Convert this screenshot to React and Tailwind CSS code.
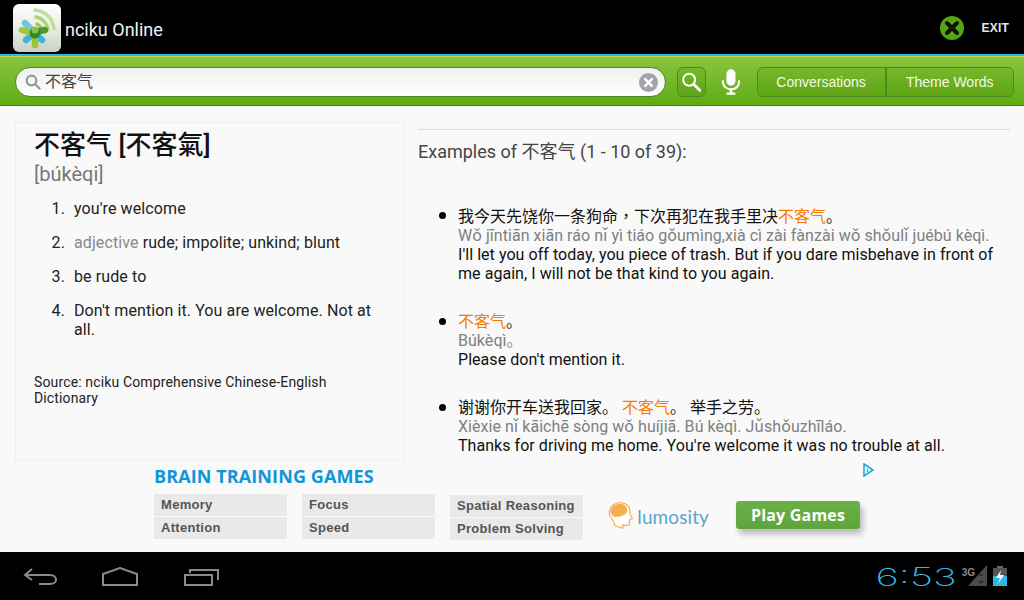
const CJK = 'font-["Roboto","Noto_Sans_CJK_SC",sans-serif]';

function Logo() {
    return (
        <div className="w-12 h-12 rounded-md bg-gradient-to-b from-white via-[#e8eee0] to-[#c9d0c4] overflow-hidden shrink-0">
            <svg viewBox="0 0 48 48" className="w-12 h-12">
                <path d="M22 6 C32 7 40 14 41 25" fill="none" stroke="#c3dc9c" strokeWidth="3.5" strokeLinecap="round" />
                <path d="M23 13 C29 14 34 19 35 25" fill="none" stroke="#aed07a" strokeWidth="3.5" strokeLinecap="round" />
                <path d="M24 20 C26 21 28 23 29 25" fill="none" stroke="#9cc55a" strokeWidth="3.5" strokeLinecap="round" />
                <g strokeLinecap="round" strokeWidth="6.5">
                    <path d="M12 19 L19 26" stroke="#6cc6e0" />
                    <path d="M29 36 L25 32" stroke="#3db4dc" />
                    <path d="M13 36 L19 31" stroke="#3db4dc" />
                    <path d="M9 26 L16 28" stroke="#a3c63c" />
                    <path d="M22 32 L22 41" stroke="#9cc23b" />
                    <path d="M26 27 L32 26" stroke="#4d9a2b" />
                </g>
                <circle cx="22" cy="29" r="5.5" fill="#2f8a2a" />
                <circle cx="22" cy="26" r="3.5" fill="#8fbc4a" />
            </svg>
        </div>
    );
}

function TopBar() {
    return (
        <div className="h-[54px] bg-black flex items-center pt-[2px] pl-[13px] pr-[15px]">
            <Logo />
            <span className="ml-1 mt-[2px] text-[18px] text-[#f2f2f2] font-['Roboto',sans-serif]">nciku Online</span>
            <svg viewBox="0 0 24 24" className="ml-auto w-6 h-6">
                <circle cx="12" cy="12" r="12" fill="#57a515" />
                <path d="M7 7 L17 17 M17 7 L7 17" stroke="#0b1405" strokeWidth="4" strokeLinecap="round" />
            </svg>
            <span className="ml-[18px] text-[12px] font-bold text-[#e6e6e6] tracking-[0.2px] font-['Liberation_Sans',sans-serif]">EXIT</span>
        </div>
    );
}

function SearchBar() {
    return (
        <div className="h-[50px] pt-[2px] border-t border-[#b5dc5c] border-b border-b-[#3e7a0c] bg-gradient-to-b from-[#8ac53e] to-[#5fab10] flex items-center pl-[15px] pr-[10px]">
            <div className="w-[652px] h-[30px] rounded-full bg-gradient-to-b from-[#f0f0f0] to-white border border-[#4e8a18] flex items-center pl-[9px] pr-[7px]">
                <svg viewBox="0 0 16 16" className="w-[16px] h-[16px] shrink-0">
                    <circle cx="6.5" cy="6.5" r="4.8" fill="none" stroke="#8f9a9a" strokeWidth="2.2" />
                    <path d="M10 10 L14.5 14.5" stroke="#8f9a9a" strokeWidth="2.4" strokeLinecap="round" />
                </svg>
                <span className={`ml-[4px] text-[16px] text-[#444] ${CJK}`}>不客气</span>
                <svg viewBox="0 0 20 20" className="ml-auto w-[19px] h-[19px]">
                    <circle cx="10" cy="10" r="10" fill="#a3a3aa" />
                    <path d="M6.5 6.5 L13.5 13.5 M13.5 6.5 L6.5 13.5" stroke="#fff" strokeWidth="2.6" strokeLinecap="round" />
                </svg>
            </div>
            <div className="ml-[11px] w-[29px] h-[30px] rounded-md border border-[#4e8a18] bg-gradient-to-b from-[#76b82c] to-[#5fa514] flex items-center justify-center">
                <svg viewBox="0 0 24 24" className="w-[22px] h-[22px]">
                    <circle cx="10" cy="9.5" r="6.5" fill="none" stroke="#fff" strokeWidth="2.2" />
                    <path d="M15 14.5 L21.5 21" stroke="#fff" strokeWidth="3.2" strokeLinecap="round" />
                </svg>
            </div>
            <svg viewBox="0 0 22 30" className="ml-[15px] w-[20px] h-[28px]">
                <rect x="6" y="1" width="10" height="18" rx="5" fill="#fff" />
                <path d="M2 13 C2 20 6 23 11 23 C16 23 20 20 20 13" fill="none" stroke="#fff" strokeWidth="2.2" />
                <rect x="9.5" y="23" width="3" height="4" fill="#fff" />
                <rect x="6" y="26.5" width="10" height="2.5" rx="1" fill="#fff" />
            </svg>
            <div className="ml-[16px] w-[258px] h-[30px] rounded-md border border-[#4e8a18] bg-gradient-to-b from-[#76b82c] to-[#5fa514] flex items-center text-[14px] text-[#f2f8e8] font-['Liberation_Sans',sans-serif]">
                <div className="w-[129px] h-full flex items-center justify-center border-r-2 border-[#4e8a18]">Conversations</div>
                <div className="flex-1 flex items-center justify-center">Theme Words</div>
            </div>
        </div>
    );
}

function Definition() {
    const items = [
        <>you're welcome</>,
        <><span className="text-[#888]">adjective</span> rude; impolite; unkind; blunt</>,
        <>be rude to</>,
        <>Don't mention it. You are welcome. Not at all.</>,
    ];
    return (
        <div className="ml-[15px] mt-[16px] w-[390px] h-[339px] border border-[#efefef] pl-[18px] pr-[14px] shrink-0">
            <div className="mt-[5px] text-[26px] leading-[34px] text-[#111] font-medium">不客气 [不客氣]</div>
            <div className="text-[20px] leading-[24px] text-[#777]">[búkèqi]</div>
            <ol className="mt-[13px] ml-px text-[16px] leading-[19px] tracking-[0.1px] text-[#222]">
                {items.map((item, i) => (
                    <li key={i} className="flex mb-[15px]">
                        <span className="w-[39px] text-right pr-[9px] shrink-0">{i + 1}.</span>
                        <span>{item}</span>
                    </li>
                ))}
            </ol>
            <p className="mt-[35px] pr-[40px] text-[14px] leading-[16px] tracking-[0.14px] text-[#222]">Source: nciku Comprehensive Chinese-English Dictionary</p>
        </div>
    );
}

function Example({ className, zh, py, en }) {
    return (
        <li className={`flex ${className}`}>
            <span className="w-[7px] h-[7px] mt-[6px] ml-[21px] mr-[12px] rounded-full bg-black shrink-0"></span>
            <div className="text-[16px] leading-[19px]">
                <div className="text-[#111]">{zh}</div>
                <div className="text-[#808080] tracking-[0.04px]">{py}</div>
                <div className="text-[#111] tracking-[0.05px]">{en}</div>
            </div>
        </li>
    );
}

function Examples() {
    const hl = (t) => <span className="text-[#f57c00]">{t}</span>;
    return (
        <div className="ml-[13px] mt-[23px] flex-1 pr-[14px] overflow-hidden">
            <div className="border-t border-[#dcdcdc] pt-[11px] text-[18px] leading-[22px] text-[#444]">Examples of 不客气 (1 - 10 of 39):</div>
            <ul>
                <Example
                    className="mt-[43px]"
                    zh={<>我今天先饶你一条狗命<span className='font-["Noto_Sans_CJK_TC"]'>，</span>下次再犯在我手里决{hl('不客气')}。</>}
                    py="Wǒ jīntiān xiān ráo nǐ yì tiáo gǒumìng,xià cì zài fànzài wǒ shǒulǐ juébú kèqì."
                    en="I'll let you off today, you piece of trash. But if you dare misbehave in front of me again, I will not be that kind to you again."
                />
                <Example
                    className="mt-[29px]"
                    zh={<>{hl('不客气')}。</>}
                    py="Búkèqì。"
                    en="Please don't mention it."
                />
                <Example
                    className="mt-[29px]"
                    zh={<>谢谢你开车送我回家。 {hl('不客气')}。 举手之劳。</>}
                    py="Xièxie nǐ kāichē sòng wǒ huíjiā. Bú kèqì. Jǔshǒuzhīláo."
                    en="Thanks for driving me home. You're welcome it was no trouble at all."
                />
            </ul>
        </div>
    );
}

function AdCell({ children, className }) {
    return (
        <div className={`w-[133px] h-[22px] bg-[#e9e9e9] pl-[7px] flex items-center text-[13px] font-bold tracking-[0.3px] text-[#555] font-['Liberation_Sans',sans-serif] ${className}`}>
            {children}
        </div>
    );
}

function Lumosity() {
    return (
        <div className="flex items-center">
            <svg viewBox="0 0 30 32" className="w-[28px] h-[30px]">
                <path d="M3 15 C1 7 8 1 15 1 C23 1 27 7 26 13 L29 19 L26 20 L25 26 C22 27 20 27 18 26 L18 30 L9 27 C9 22 5 20 3 15 Z" fill="#fff" stroke="#f4a43a" strokeWidth="1.2" />
                <path d="M4 11 C4 6 9 2 15 2 C21 2 24 7 23 11 C21 16 15 17 10 17 C7 17 4 15 4 11 Z" fill="#f5b04e" />
            </svg>
            <span className="ml-[4px] text-[19px] leading-none tracking-[0.1px] text-[#5aa5c8] font-['Lato',sans-serif]">lumosity</span>
        </div>
    );
}

function Ad() {
    return (
        <div className="relative h-[91px] flex pl-[154px]">
            <svg viewBox="0 0 13 14" className="absolute left-[862px] top-[2px] w-[13px] h-[14px]">
                <path d="M2 1 L11 7 L2 13 Z" fill="none" stroke="#18aed2" strokeWidth="1.6" />
                <path d="M5.5 5.5 V9" stroke="#18aed2" strokeWidth="1.2" />
            </svg>
            <div className="w-[300px]">
                <div className="mt-[6px] h-[18px] text-[18px] leading-[18px] font-bold tracking-[0.1px] text-[#0f95d8] font-['Open_Sans',sans-serif]">BRAIN TRAINING GAMES</div>
                <div className="mt-[9px] grid grid-cols-[133px_133px] gap-x-[15px] gap-y-px">
                    <AdCell>Memory</AdCell>
                    <AdCell>Focus</AdCell>
                    <AdCell>Attention</AdCell>
                    <AdCell>Speed</AdCell>
                </div>
            </div>
            <div className="ml-[-4px] mt-[34px] flex flex-col gap-px">
                <AdCell>Spatial Reasoning</AdCell>
                <AdCell>Problem Solving</AdCell>
            </div>
            <div className="ml-[24px] mt-[40px] h-[30px] w-[102px]">
                <Lumosity />
            </div>
            <div className="ml-[27px] mt-[40px] w-[124px] h-[28px] rounded-[3px] bg-gradient-to-b from-[#6cb04a] to-[#5da53a] shadow-[3px_5px_6px_rgba(0,0,0,0.25)] flex items-center justify-center text-[16px] font-bold tracking-[0.2px] text-white font-['Open_Sans',sans-serif]">
                Play Games
            </div>
        </div>
    );
}

function NavBar() {
    return (
        <div className="h-[48px] bg-black flex items-center pt-[2px] text-[#8a8a8a]">
            <svg viewBox="0 0 36 20" className="ml-[23px] w-[36px] h-[20px]" fill="none" stroke="#8a8a8a" strokeWidth="2">
                <path d="M9 2 L2 8 L9 13 M2 8 H27 C35 8 35 17 27 17 H16" />
            </svg>
            <svg viewBox="0 0 36 20" className="ml-[43px] w-[36px] h-[20px]" fill="none" stroke="#8a8a8a" strokeWidth="2">
                <path d="M1 7 L18 1 L35 7 V18 H1 Z" />
            </svg>
            <svg viewBox="0 0 36 20" className="ml-[46px] w-[36px] h-[20px]" fill="none" stroke="#8a8a8a" strokeWidth="2">
                <rect x="1" y="8" width="27" height="10" />
                <path d="M6 6 V3 H34 V13" />
            </svg>
            <span className="ml-auto text-[25px] leading-none text-[#33b5e5] font-extralight scale-x-[1.6] origin-right font-['Inter',sans-serif]">6:53</span>
            <div className="ml-[5px] mb-[4px] flex items-end">
                <span className="mb-[8px] text-[10px] leading-none font-bold text-[#8a8a8a] font-['Liberation_Sans',sans-serif]">3G</span>
                <svg viewBox="0 0 19 21" className="ml-[-7px] w-[19px] h-[21px]">
                    <path d="M0 21 L19 0 V21 Z" fill="#4a4a4a" />
                    <path d="M13 8 L15.5 11 H10.5 Z M13 19 L15.5 16 H10.5 Z" fill="#2a2a2a" />
                </svg>
            </div>
            <svg viewBox="0 0 14 20" className="ml-[6px] mr-[17px] mb-[2px] w-[14px] h-[20px]">
                <rect x="4" y="0" width="6" height="3" fill="#666" />
                <rect x="0" y="2" width="14" height="8" fill="#555" />
                <rect x="0" y="10" width="14" height="10" fill="#33b5e5" />
                <path d="M8 4 L3 12 H7 L5 18 L11 9 H7 Z" fill="#e8f6fb" />
            </svg>
        </div>
    );
}

export default function App() {
    return (
        <div className={`w-[1024px] h-[600px] overflow-hidden flex flex-col bg-[#f9f9f9] ${CJK}`}>
            <TopBar />
            <div className="h-[2px] bg-[#33b5e5]"></div>
            <SearchBar />
            <div className="h-[355px] flex overflow-hidden">
                <Definition />
                <Examples />
            </div>
            <Ad />
            <NavBar />
        </div>
    );
}
